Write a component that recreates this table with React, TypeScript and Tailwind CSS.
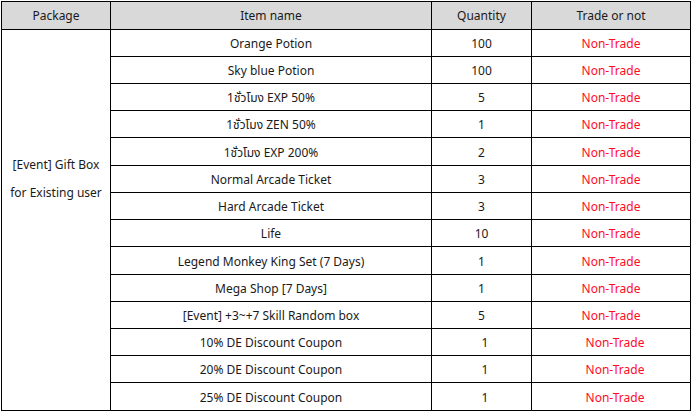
import React from "react";

type Row = { name: string; qty: string; shift?: boolean; h: number };

const rows: Row[] = [
  { name: "Orange Potion", qty: "100", h: 27 },
  { name: "Sky blue Potion", qty: "100", h: 27 },
  { name: "1ชั่วโมง EXP 50%", qty: "5", h: 27 },
  { name: "1ชั่วโมง ZEN 50%", qty: "1", h: 27 },
  { name: "1ชั่วโมง EXP 200%", qty: "2", h: 28 },
  { name: "Normal Arcade Ticket", qty: "3", h: 27 },
  { name: "Hard Arcade Ticket", qty: "3", h: 27 },
  { name: "Life", qty: "10", h: 27 },
  { name: "Legend Monkey King Set (7 Days)", qty: "1", h: 28 },
  { name: "Mega Shop [7 Days]", qty: "1", h: 27 },
  { name: "[Event] +3~+7 Skill Random box", qty: "5", h: 27 },
  { name: "10% DE Discount Coupon", qty: "1", shift: true, h: 27 },
  { name: "20% DE Discount Coupon", qty: "1", shift: true, h: 27 },
  { name: "25% DE Discount Coupon", qty: "1", shift: true, h: 28 },
];

export default function App() {
  return (
    <div
      className="w-[692px] h-[411px] bg-white pl-[1px] pt-[1px]"
      style={{ fontFamily: '"Noto Sans", "Noto Sans Thai", "DejaVu Sans", sans-serif' }}
    >
      <table className="border-collapse text-[12px] text-[#1a1a1a] leading-none table-fixed w-[689px]">
        <colgroup>
          <col className="w-[109px]" />
          <col className="w-[321px]" />
          <col className="w-[100px]" />
          <col className="w-[159px]" />
        </colgroup>
        <thead>
          <tr className="h-[28px] bg-[#d9d9d9]">
            <th className="border border-black font-normal text-center p-0">Package</th>
            <th className="border border-black font-normal text-center p-0">Item name</th>
            <th className="border border-black font-normal text-center p-0">Quantity</th>
            <th className="border border-black font-normal text-center p-0">Trade or not</th>
          </tr>
        </thead>
        <tbody>
          {rows.map((r, i) => (
            <tr key={i} style={{ height: r.h }}>
              {i === 0 && (
                <td
                  rowSpan={rows.length}
                  className="border border-black align-top text-center p-0 pt-[121px] leading-[28px]"
                >
                  [Event] Gift Box
                  <br />
                  for Existing user
                </td>
              )}
              <td className="border border-black text-center p-0 pt-[2px]">{r.name}</td>
              <td className={`border border-black text-center p-0 pt-[2px] ${r.shift ? "pl-[7px]" : ""}`}>{r.qty}</td>
              <td className={`border border-black text-center p-0 pt-[2px] text-[#ff0a2a] ${r.shift ? "pl-[8px]" : ""}`}>
                Non-Trade
              </td>
            </tr>
          ))}
        </tbody>
      </table>
    </div>
  );
}
